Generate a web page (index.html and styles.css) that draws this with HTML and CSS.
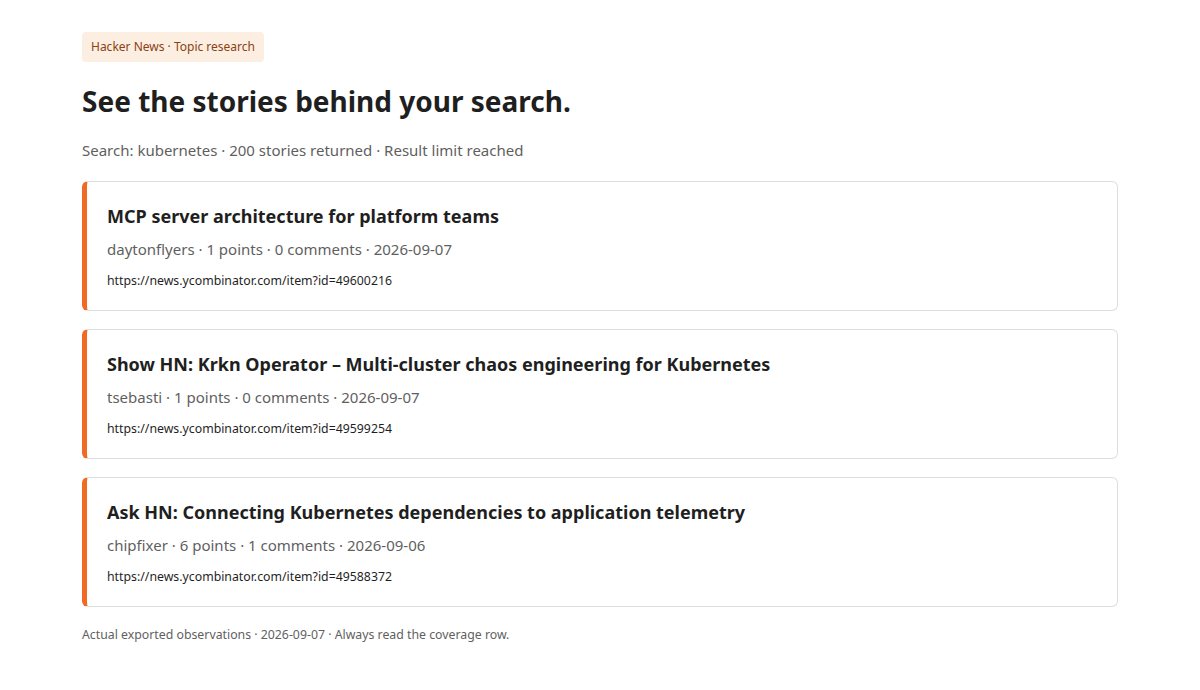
FILE: index.html
```html
<!DOCTYPE html>
<html lang="en">
<head>
    <meta charset="UTF-8">
    <meta name="viewport" content="width=device-width, initial-scale=1.0">
    <title>Topic research</title>
    <link rel="stylesheet" href="styles.css">
</head>
<body>
    <main class="page">
        <span class="eyebrow">Hacker News · Topic research</span>
        <h1>See the stories behind your search.</h1>
        <p class="summary">Search: kubernetes · 200 stories returned · Result limit reached</p>

        <section class="stories">
            <article class="story">
                <h2>MCP server architecture for platform teams</h2>
                <p class="meta">daytonflyers · 1 points · 0 comments · 2026-09-07</p>
                <p class="link">https://news.ycombinator.com/item?id=49600216</p>
            </article>
            <article class="story">
                <h2>Show HN: Krkn Operator – Multi-cluster chaos engineering for Kubernetes</h2>
                <p class="meta">tsebasti · 1 points · 0 comments · 2026-09-07</p>
                <p class="link">https://news.ycombinator.com/item?id=49599254</p>
            </article>
            <article class="story">
                <h2>Ask HN: Connecting Kubernetes dependencies to application telemetry</h2>
                <p class="meta">chipfixer · 6 points · 1 comments · 2026-09-06</p>
                <p class="link">https://news.ycombinator.com/item?id=49588372</p>
            </article>
        </section>

        <p class="footnote">Actual exported observations · 2026-09-07 · Always read the coverage row.</p>
    </main>
</body>
</html>
```

FILE: styles.css
```css
:root {
  --clr-text: #1f1f1f;
  --clr-muted: #5f5f5f;
  --clr-accent: #f06a24;
  --clr-border: #dedede;
  --radius: 6px;
}

*,
::after,
::before {
  margin: 0;
  padding: 0;
  box-sizing: border-box;
}

body {
  font-family: "Noto Sans", "Open Sans", sans-serif;
  color: var(--clr-text);
  background: #fff;
}

.page {
  max-width: 1036px;
  margin: 0 auto;
  padding-top: 32px;
}

.eyebrow {
  display: inline-block;
  background: #fdeee2;
  color: #8a4212;
  font-size: 12px;
  line-height: 18px;
  padding: 6px 9px 6px;
  border-radius: 4px;
}

h1 {
  font-size: 28px;
  line-height: 1.2;
  font-weight: 700;
  margin-top: 23px;
}

.summary {
  font-size: 15px;
  color: var(--clr-muted);
  margin-top: 21px;
  line-height: 20px;
}

.stories {
  display: flex;
  flex-direction: column;
  gap: 18px;
  margin-top: 21px;
}

.story {
  border: 1px solid var(--clr-border);
  border-left: 5px solid var(--clr-accent);
  border-radius: var(--radius);
  padding: 22px 20px 20px;
  height: 130px;
}

.story h2 {
  font-size: 18px;
  line-height: 24px;
  font-weight: 700;
}

.story .meta {
  font-size: 15px;
  color: var(--clr-muted);
  line-height: 20px;
  margin-top: 11px;
}

.story .link {
  font-size: 12.3px;
  line-height: 16px;
  margin-top: 14px;
}

.footnote {
  font-size: 12.3px;
  color: var(--clr-muted);
  margin-top: 19px;
}
```
